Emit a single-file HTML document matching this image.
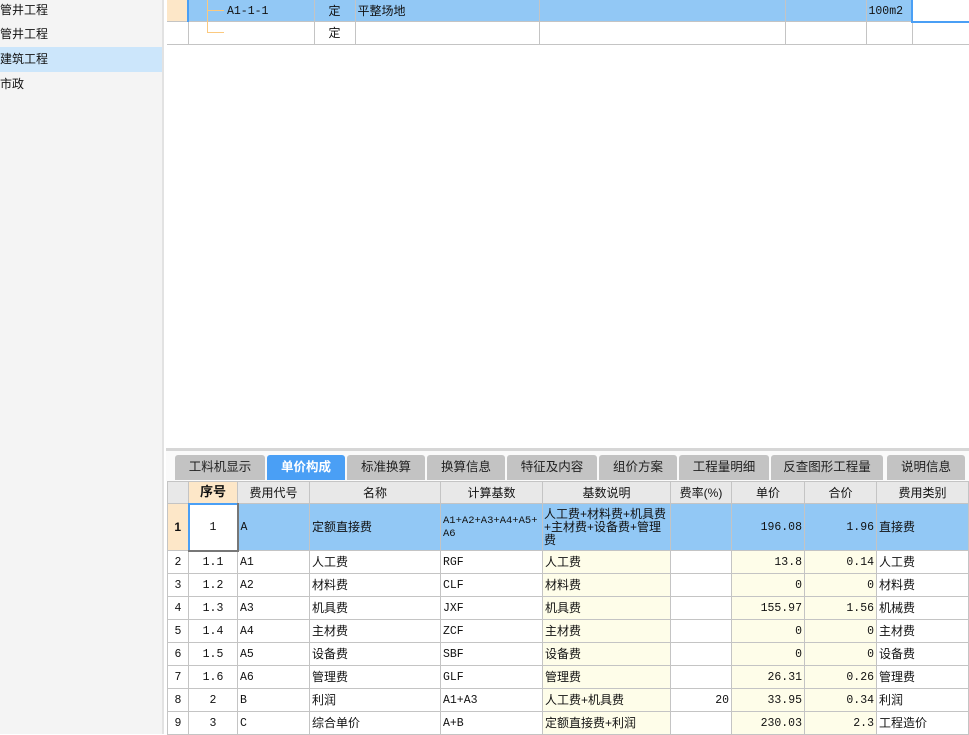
<!DOCTYPE html>
<html><head><meta charset="utf-8"><style>
*{margin:0;padding:0;box-sizing:border-box}
body{width:969px;height:734px;overflow:hidden;background:#fff;font-family:"Liberation Sans","Noto Sans CJK SC",sans-serif;font-size:12px;color:#111;position:relative}
.left{position:absolute;left:0;top:0;width:164px;height:734px;background:#f4f4f4;border-right:2px solid #e2e2e2}
.left div{height:25px;line-height:25px;font-size:12px}
.left .sel{background:#cce6fb}
.abs{position:absolute}
table{border-collapse:collapse;table-layout:fixed;position:absolute}
td{border:1px solid #c4c4c4;overflow:hidden;white-space:nowrap;padding:0 2px;vertical-align:middle;line-height:14px}
.m{font-family:"Liberation Mono",monospace;font-size:11.5px;padding-top:2px}
.c{text-align:center}.r{text-align:right}
.y{background:#fefde9}
.hd td{background:#e8e8e8;text-align:center;height:22px}
.blue td{background:#92c8f5}
.tab{position:absolute;top:455px;height:25px;background:#c3c3c3;border-radius:3px 3px 0 0;text-align:center;line-height:25px;font-size:12.5px;color:#222}
.tab.on{background:#4a9ff5;color:#fff;font-weight:bold}
</style></head><body>
<div class="left">
<div style="height:22px;line-height:20px">管井工程</div>
<div>管井工程</div>
<div class="sel">建筑工程</div>
<div>市政</div>
</div>
<table style="left:167px;top:-1px;width:802px">
<colgroup><col style="width:21px"><col style="width:126px"><col style="width:41px"><col style="width:184px"><col style="width:246px"><col style="width:81px"><col style="width:46px"><col style="width:57px"></colgroup>
<tr class="blue" style="height:22px"><td style="background:#fde7c8;border-left:none"></td><td class="m" style="border-left:2px solid #4a9ff5;padding-left:38px">A1-1-1</td><td class="c">定</td><td>平整场地</td><td></td><td></td><td class="m">100m2</td><td style="background:#fff;border-left:2px solid #4a9ff5;border-bottom:2px solid #4a9ff5"></td></tr>
<tr style="height:23px"><td style="border-left:none"></td><td></td><td class="c">定</td><td></td><td></td><td></td><td></td><td></td></tr>
</table>
<div class="abs" style="left:207px;top:0;width:1px;height:33px;background:#fbc97f"></div>
<div class="abs" style="left:207px;top:10px;width:17px;height:1px;background:#fbc97f"></div>
<div class="abs" style="left:207px;top:32px;width:17px;height:1px;background:#fbc97f"></div>
<div class="abs" style="left:166px;top:448px;width:803px;height:3px;background:#d6d6d6"></div>
<div class="abs" style="left:166px;top:451px;width:803px;height:30px;background:#fafafa"></div>
<div class="tab" style="left:175px;width:90px">工料机显示</div>
<div class="tab on" style="left:267px;width:78px">单价构成</div>
<div class="tab" style="left:347px;width:78px">标准换算</div>
<div class="tab" style="left:427px;width:78px">换算信息</div>
<div class="tab" style="left:507px;width:90px">特征及内容</div>
<div class="tab" style="left:599px;width:78px">组价方案</div>
<div class="tab" style="left:679px;width:90px">工程量明细</div>
<div class="tab" style="left:771px;width:112px">反查图形工程量</div>
<div class="tab" style="left:887px;width:78px">说明信息</div>
<table style="left:167px;top:481px;width:801px">
<colgroup><col style="width:21px"><col style="width:49px"><col style="width:72px"><col style="width:131px"><col style="width:102px"><col style="width:128px"><col style="width:61px"><col style="width:73px"><col style="width:72px"><col style="width:92px"></colgroup>
<tr class="hd"><td></td><td style="background:#fde7c8;font-weight:bold;font-size:13px">序号</td><td>费用代号</td><td>名称</td><td>计算基数</td><td>基数说明</td><td>费率(%)</td><td>单价</td><td>合价</td><td>费用类别</td></tr>
<tr class="blue" style="height:47px"><td class="c" style="background:#fde7c8;font-weight:bold">1</td><td class="c m" style="background:#fff;border:2px solid #777;border-top-color:#4a9ff5;border-left-color:#4a9ff5">1</td><td class="m">A</td><td>定额直接费</td><td class="m" style="white-space:normal;line-height:13px;word-break:break-all;font-size:10.5px">A1+A2+A3+A4+A5+A6</td><td style="white-space:normal;line-height:13px;padding:0 1px">人工费+材料费+机具费+主材费+设备费+管理费</td><td></td><td class="r m">196.08</td><td class="r m">1.96</td><td>直接费</td></tr>
<tr style="height:23px"><td class="c m">2</td><td class="c m">1.1</td><td class="m">A1</td><td>人工费</td><td class="m">RGF</td><td class="y">人工费</td><td></td><td class="y r m">13.8</td><td class="y r m">0.14</td><td>人工费</td></tr>
<tr style="height:23px"><td class="c m">3</td><td class="c m">1.2</td><td class="m">A2</td><td>材料费</td><td class="m">CLF</td><td class="y">材料费</td><td></td><td class="y r m">0</td><td class="y r m">0</td><td>材料费</td></tr>
<tr style="height:23px"><td class="c m">4</td><td class="c m">1.3</td><td class="m">A3</td><td>机具费</td><td class="m">JXF</td><td class="y">机具费</td><td></td><td class="y r m">155.97</td><td class="y r m">1.56</td><td>机械费</td></tr>
<tr style="height:23px"><td class="c m">5</td><td class="c m">1.4</td><td class="m">A4</td><td>主材费</td><td class="m">ZCF</td><td class="y">主材费</td><td></td><td class="y r m">0</td><td class="y r m">0</td><td>主材费</td></tr>
<tr style="height:23px"><td class="c m">6</td><td class="c m">1.5</td><td class="m">A5</td><td>设备费</td><td class="m">SBF</td><td class="y">设备费</td><td></td><td class="y r m">0</td><td class="y r m">0</td><td>设备费</td></tr>
<tr style="height:23px"><td class="c m">7</td><td class="c m">1.6</td><td class="m">A6</td><td>管理费</td><td class="m">GLF</td><td class="y">管理费</td><td></td><td class="y r m">26.31</td><td class="y r m">0.26</td><td>管理费</td></tr>
<tr style="height:23px"><td class="c m">8</td><td class="c m">2</td><td class="m">B</td><td>利润</td><td class="m">A1+A3</td><td class="y">人工费+机具费</td><td class="r m">20</td><td class="y r m">33.95</td><td class="y r m">0.34</td><td>利润</td></tr>
<tr style="height:23px"><td class="c m">9</td><td class="c m">3</td><td class="m">C</td><td>综合单价</td><td class="m">A+B</td><td class="y">定额直接费+利润</td><td></td><td class="y r m">230.03</td><td class="y r m">2.3</td><td>工程造价</td></tr>
</table>
</body></html>
